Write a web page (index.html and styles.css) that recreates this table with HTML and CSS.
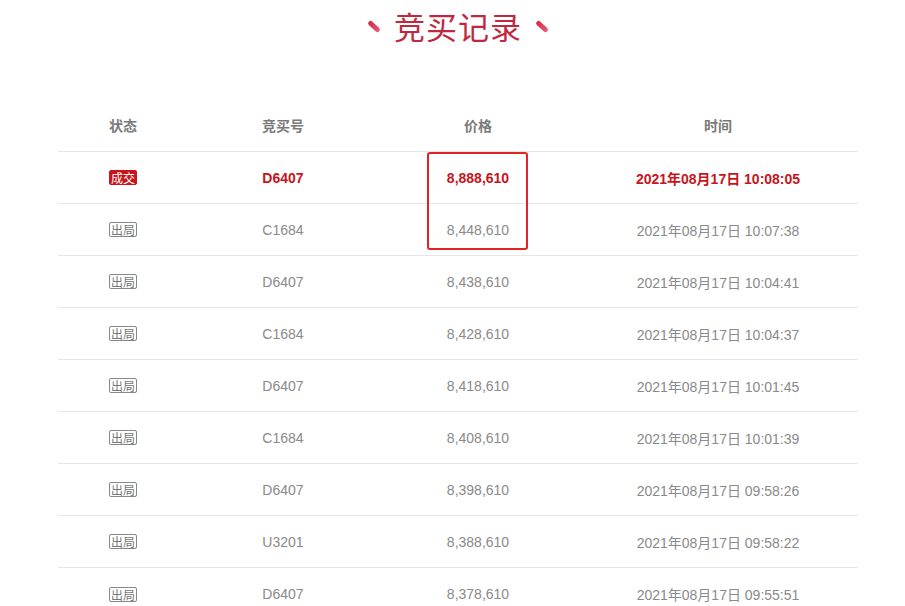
FILE: index.html
```html
<!DOCTYPE html>
<html lang="zh-CN">
<head>
<meta charset="utf-8">
<title>竞买记录</title>
<link rel="stylesheet" href="styles.css">
</head>
<body>
<div class="page">
  <h1 class="title"><span class="dash"></span><span class="title-text">竞买记录</span><span class="dash"></span></h1>
  <div class="records">
    <div class="row head"><div>状态</div><div>竞买号</div><div>价格</div><div>时间</div></div>
    <div class="row win"><div><span class="badge badge-win">成交</span></div><div>D6407</div><div>8,888,610</div><div>2021年08月17日 10:08:05</div></div>
    <div class="row"><div><span class="badge">出局</span></div><div>C1684</div><div>8,448,610</div><div>2021年08月17日 10:07:38</div></div>
    <div class="row"><div><span class="badge">出局</span></div><div>D6407</div><div>8,438,610</div><div>2021年08月17日 10:04:41</div></div>
    <div class="row"><div><span class="badge">出局</span></div><div>C1684</div><div>8,428,610</div><div>2021年08月17日 10:04:37</div></div>
    <div class="row"><div><span class="badge">出局</span></div><div>D6407</div><div>8,418,610</div><div>2021年08月17日 10:01:45</div></div>
    <div class="row"><div><span class="badge">出局</span></div><div>C1684</div><div>8,408,610</div><div>2021年08月17日 10:01:39</div></div>
    <div class="row"><div><span class="badge">出局</span></div><div>D6407</div><div>8,398,610</div><div>2021年08月17日 09:58:26</div></div>
    <div class="row"><div><span class="badge">出局</span></div><div>U3201</div><div>8,388,610</div><div>2021年08月17日 09:58:22</div></div>
    <div class="row last"><div><span class="badge">出局</span></div><div>D6407</div><div>8,378,610</div><div>2021年08月17日 09:55:51</div></div>
    <div class="highlight"></div>
  </div>
</div>
</body>
</html>
```

FILE: styles.css
```css
html, body {
  margin: 0;
  padding: 0;
  background: #ffffff;
}
body {
  font-family: "Liberation Sans", "Noto Sans CJK SC", sans-serif;
  overflow: hidden;
}
.page {
  width: 905px;
  height: 606px;
  overflow: hidden;
}
.title {
  margin: 0;
  height: 100px;
  display: flex;
  justify-content: center;
  align-items: flex-start;
  gap: 13px;
  padding-top: 5px;
  padding-left: 11px;
  box-sizing: border-box;
}
.title-text {
  font-family: "Noto Sans CJK SC", sans-serif;
  font-weight: 400;
  font-size: 31px;
  line-height: 42px;
  color: #c0283f;
  letter-spacing: 1px;
}
.dash {
  width: 14px;
  height: 5px;
  border-radius: 3px;
  background: linear-gradient(90deg, #d8294c, #e45a75);
  transform: rotate(42deg);
  margin-top: 19px;
}
.records {
  position: relative;
  width: 800px;
  margin-left: 58px;
}
.row {
  display: grid;
  grid-template-columns: 130px 190px 200px 280px;
  height: 52px;
  box-sizing: border-box;
  border-bottom: 1px solid #e6e6e6;
  font-size: 14px;
  color: #8a8a8a;
}
.row > div {
  display: flex;
  align-items: center;
  justify-content: center;
}
.row.head {
  color: #7a7a7a;
  font-weight: bold;
  font-family: "Noto Sans CJK SC", sans-serif;
}
.row.head > div {
  padding-bottom: 2px;
}
.row.last {
  border-bottom: none;
}
.row.win {
  color: #c8141c;
  font-weight: bold;
}
.badge {
  display: inline-block;
  box-sizing: border-box;
  width: 28px;
  height: 15px;
  line-height: 13px;
  font-size: 12px;
  font-weight: normal;
  text-align: center;
  font-family: "Noto Sans CJK SC", sans-serif;
  color: #777;
  border: 1px solid #888;
  border-radius: 2px;
}
.badge-win {
  background: #c8141c;
  border-color: #c8141c;
  color: #ffffff;
}
.highlight {
  position: absolute;
  left: 369px;
  top: 52px;
  width: 101px;
  height: 98px;
  box-sizing: border-box;
  border: 2.5px solid #e02424;
  border-radius: 3px;
}
```
